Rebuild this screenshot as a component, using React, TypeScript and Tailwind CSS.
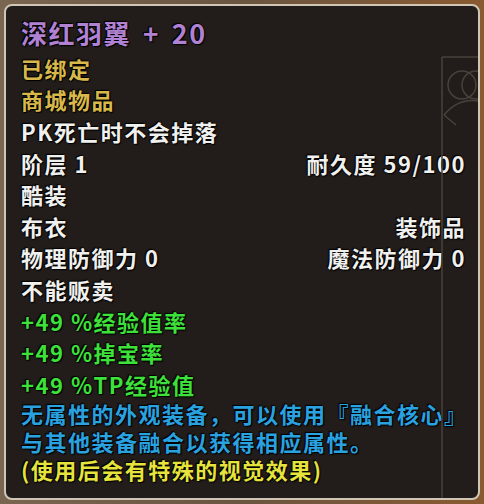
import React from 'react'

const font = "font-['Noto_Sans_CJK_SC','Noto_Sans',sans-serif]"
const outline = '[text-shadow:0_0_2px_#000,1px_1px_1px_#000,-1px_-1px_1px_#000]'

const Row = ({ children, h = 'h-[31.6px]', cls = '' }: { children: React.ReactNode; h?: string; cls?: string }) => (
  <div className={`flex items-center justify-between ${h} ${cls}`}>{children}</div>
)

const Knot = () => (
  <svg className="absolute right-0 top-[49px] pointer-events-none" width="38" height="449" viewBox="0 0 38 449" fill="none">
    <path d="M2 2 H38 M2 2 V449" stroke="#48413b" strokeWidth="1.5" />
    <circle cx="22" cy="30" r="14" stroke="#48413b" strokeWidth="1.5" />
    <circle cx="36" cy="30" r="14" stroke="#48413b" strokeWidth="1.5" />
    <path d="M4 60 C14 48 26 44 38 46 M4 60 L16 70" stroke="#48413b" strokeWidth="1.5" />
  </svg>
)

export default function App() {
  return (
    <div className="w-[484px] h-[504px] p-[4px] bg-gradient-to-r from-[#7a6650] via-[#6a5540] to-[#8a5a30]">
      <div className={`relative h-full rounded-[8px] border-2 border-[#cfc6b6] bg-[#221d1a] pl-[15px] pr-[12px] pt-[8px] ${font} font-bold text-[22px] leading-[26px] tracking-[1.5px] ${outline} overflow-hidden`}>
        <Knot />
        <Row h="h-[38px]">
          <span className="text-[26px] leading-[30px] text-[#b182d4]">
            深红羽翼<span className="ml-[12px]">+</span><span className="ml-[12px] text-[27px]">20</span>
          </span>
        </Row>
        <Row cls="text-[#d8b84a]"><span>已绑定</span></Row>
        <Row cls="text-[#d8b84a]"><span>商城物品</span></Row>
        <Row cls="text-[#f0f0ee]"><span>PK死亡时不会掉落</span></Row>
        <Row cls="text-[#f0f0ee]">
          <span>阶层 1</span>
          <span>耐久度 59/100</span>
        </Row>
        <Row cls="text-[#f0f0ee]"><span>酷装</span></Row>
        <Row cls="text-[#f0f0ee]">
          <span>布衣</span>
          <span>装饰品</span>
        </Row>
        <Row cls="text-[#f0f0ee]">
          <span>物理防御力 0</span>
          <span>魔法防御力 0</span>
        </Row>
        <Row cls="text-[#f0f0ee]"><span>不能贩卖</span></Row>
        <Row cls="text-[#3ee03a]"><span>+49 %经验值率</span></Row>
        <Row cls="text-[#3ee03a]"><span>+49 %掉宝率</span></Row>
        <Row cls="text-[#3ee03a]"><span>+49 %TP经验值</span></Row>
        <Row h="h-[27px]" cls="text-[#2aa2e0] whitespace-nowrap"><span className="inline-block h-[24px] leading-[24px]">无属性的外观装备，可以使用『融合核心』</span></Row>
        <Row h="h-[28px]" cls="text-[#2aa2e0]"><span className="inline-block h-[24px] leading-[24px]">与其他装备融合以获得相应属性。</span></Row>
        <Row h="h-[29px]" cls="text-[#e6e43c]"><span className="inline-block h-[24px] leading-[24px]">(使用后会有特殊的视觉效果)</span></Row>
      </div>
    </div>
  )
}
